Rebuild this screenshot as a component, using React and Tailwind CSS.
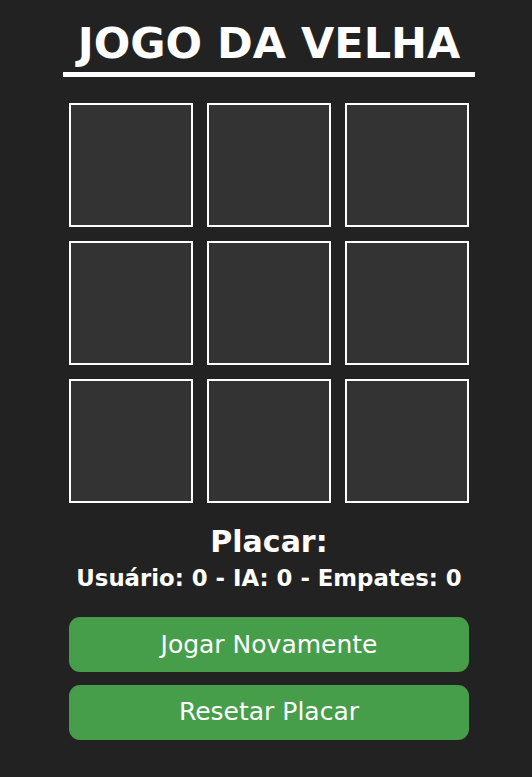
import React, { useState } from "react";

const lines = [
    [0, 1, 2], [3, 4, 5], [6, 7, 8],
    [0, 3, 6], [1, 4, 7], [2, 5, 8],
    [0, 4, 8], [2, 4, 6],
];

function getWinner(board) {
    for (const [a, b, c] of lines) {
        if (board[a] && board[a] === board[b] && board[a] === board[c]) {
            return board[a];
        }
    }
    if (board.every((cell) => cell)) return 'empate';
    return null;
}

const App = () => {
    const [board, setBoard] = useState(Array(9).fill(null));
    const [score, setScore] = useState({ usuario: 0, ia: 0, empates: 0 });
    const [gameOver, setGameOver] = useState(false);

    const updateScore = (winner) => {
        if (winner === 'X') setScore((s) => ({ ...s, usuario: s.usuario + 1 }));
        if (winner === 'O') setScore((s) => ({ ...s, ia: s.ia + 1 }));
        if (winner === 'empate') setScore((s) => ({ ...s, empates: s.empates + 1 }));
    };

    const handleClick = (index) => {
        if (gameOver || board[index]) return;

        const next = [...board];
        next[index] = 'X';
        let winner = getWinner(next);

        if (!winner) {
            // IA joga numa casa livre qualquer
            const free = next.map((c, i) => (c ? null : i)).filter((i) => i !== null);
            const pick = free[Math.floor(Math.random() * free.length)];
            next[pick] = 'O';
            winner = getWinner(next);
        }

        setBoard(next);
        if (winner) {
            setGameOver(true);
            updateScore(winner);
        }
    };

    const jogarNovamente = () => {
        setBoard(Array(9).fill(null));
        setGameOver(false);
    };

    const resetarPlacar = () => {
        setScore({ usuario: 0, ia: 0, empates: 0 });
        jogarNovamente();
    };

    return (
        <div
            className="min-h-[777px] w-full bg-[#222222] text-white pl-[6px] flex flex-col items-center"
            style={{ fontFamily: '"DejaVu Sans", Verdana, sans-serif' }}
        >
            <h1 className="mt-[17px] w-[412px] text-center text-[43px] font-bold leading-[52px] pb-[3px] border-b-[5px] border-white">
                JOGO DA VELHA
            </h1>

            <div className="mt-[26px] grid grid-cols-[124px_124px_124px] gap-[14px]">
                {board.map((cell, index) => (
                    <button
                        key={index}
                        onClick={() => handleClick(index)}
                        className="w-[124px] h-[124px] bg-[#333333] border-2 border-white text-[64px] font-bold flex items-center justify-center"
                    >
                        {cell}
                    </button>
                ))}
            </div>

            <h2 className="mt-[22px] text-[30px] font-bold leading-[34px]">Placar:</h2>
            <p className="mt-[6px] text-[22.8px] font-bold leading-[27px]">
                Usuário: {score.usuario} - IA: {score.ia} - Empates: {score.empates}
            </p>

            <button
                onClick={jogarNovamente}
                className="mt-[25px] w-[400px] h-[55px] rounded-[11px] bg-[#479e4a] text-white text-[25px]"
            >
                Jogar Novamente
            </button>
            <button
                onClick={resetarPlacar}
                className="mt-[12.5px] w-[400px] h-[55px] rounded-[11px] bg-[#479e4a] text-white text-[25px]"
            >
                Resetar Placar
            </button>
        </div>
    );
};

export default App;
